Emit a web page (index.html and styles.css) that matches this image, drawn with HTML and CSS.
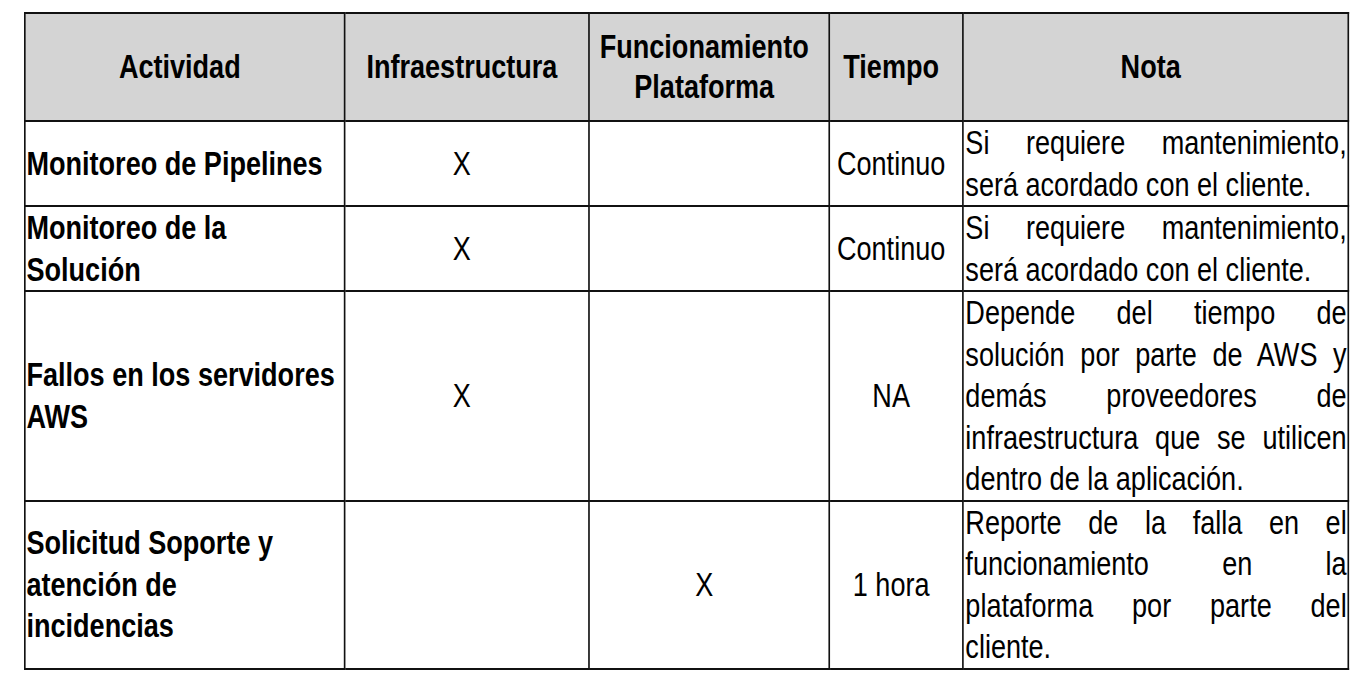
FILE: index.html
```html
<!DOCTYPE html>
<html lang="es">
<head>
<meta charset="utf-8">
<title>Actividades de soporte</title>
<link rel="stylesheet" href="styles.css">
</head>
<body>
<div class="sheet">
<table class="grid">
  <colgroup>
    <col class="c-act">
    <col class="c-inf">
    <col class="c-fun">
    <col class="c-tie">
    <col class="c-not">
  </colgroup>
  <thead>
    <tr class="head">
      <th>Actividad</th>
      <th>Infraestructura</th>
      <th>Funcionamiento<br>Plataforma</th>
      <th>Tiempo</th>
      <th>Nota</th>
    </tr>
  </thead>
  <tbody>
    <tr>
      <td class="act">Monitoreo de Pipelines</td>
      <td class="mark">X</td>
      <td class="mark"></td>
      <td class="time">Continuo</td>
      <td class="note"><span class="ln">Si requiere mantenimiento,</span><span class="ln last">será acordado con el cliente.</span></td>
    </tr>
    <tr>
      <td class="act">Monitoreo de la<br>Solución</td>
      <td class="mark">X</td>
      <td class="mark"></td>
      <td class="time">Continuo</td>
      <td class="note"><span class="ln">Si requiere mantenimiento,</span><span class="ln last">será acordado con el cliente.</span></td>
    </tr>
    <tr>
      <td class="act">Fallos en los servidores<br>AWS</td>
      <td class="mark">X</td>
      <td class="mark"></td>
      <td class="time">NA</td>
      <td class="note"><span class="ln">Depende del tiempo de</span><span class="ln">solución por parte de AWS y</span><span class="ln">demás proveedores de</span><span class="ln">infraestructura que se utilicen</span><span class="ln last">dentro de la aplicación.</span></td>
    </tr>
    <tr>
      <td class="act">Solicitud Soporte y<br>atención de<br>incidencias</td>
      <td class="mark"></td>
      <td class="mark">X</td>
      <td class="time">1 hora</td>
      <td class="note"><span class="ln">Reporte de la falla en el</span><span class="ln">funcionamiento en la</span><span class="ln">plataforma por parte del</span><span class="ln last">cliente.</span></td>
    </tr>
  </tbody>
</table>
</div>
</body>
</html>
```
FILE: styles.css
```css
html, body {
  margin: 0;
  padding: 0;
  background: #ffffff;
}

body {
  font-family: "Liberation Sans", Arial, sans-serif;
  font-size: 33px;
  color: #000000;
}

/* The source document uses a narrow grotesque (Arial Narrow metrics):
   the table is laid out at full width and condensed horizontally. */
.sheet {
  padding: 12px 0 0 24px;
}

.grid {
  width: 1614px;
  border-collapse: collapse;
  table-layout: fixed;
  border: 2px solid #111111;
  border-left-width: 2.44px;
  border-right-width: 2.44px;
  transform: scaleX(0.82);
  transform-origin: 0 0;
}

.c-act { width: 390px; }
.c-inf { width: 298px; }
.c-fun { width: 293px; }
.c-tie { width: 163px; }
.c-not { width: 470px; }

.grid th,
.grid td {
  border-top: 2px solid #111111;
  border-bottom: 2px solid #111111;
  border-left: 2.44px solid #111111;
  border-right: 2.44px solid #111111;
  padding: 0;
  vertical-align: middle;
  line-height: 41.5px;
}

.grid .head th {
  height: 106px;
  background: #d4d4d4;
  font-weight: bold;
  text-align: center;
  line-height: 40px;
  padding-right: 12px;
}

.grid .act {
  font-weight: bold;
  text-align: left;
  padding: 0 2px 0 1px;
}

.grid .mark,
.grid .time {
  text-align: center;
  padding-right: 12px;
}

.grid .note {
  padding: 0 1px 0 2px;
}

.ln {
  display: block;
  text-align: justify;
  text-align-last: justify;
}

.ln.last {
  text-align-last: left;
}
```
